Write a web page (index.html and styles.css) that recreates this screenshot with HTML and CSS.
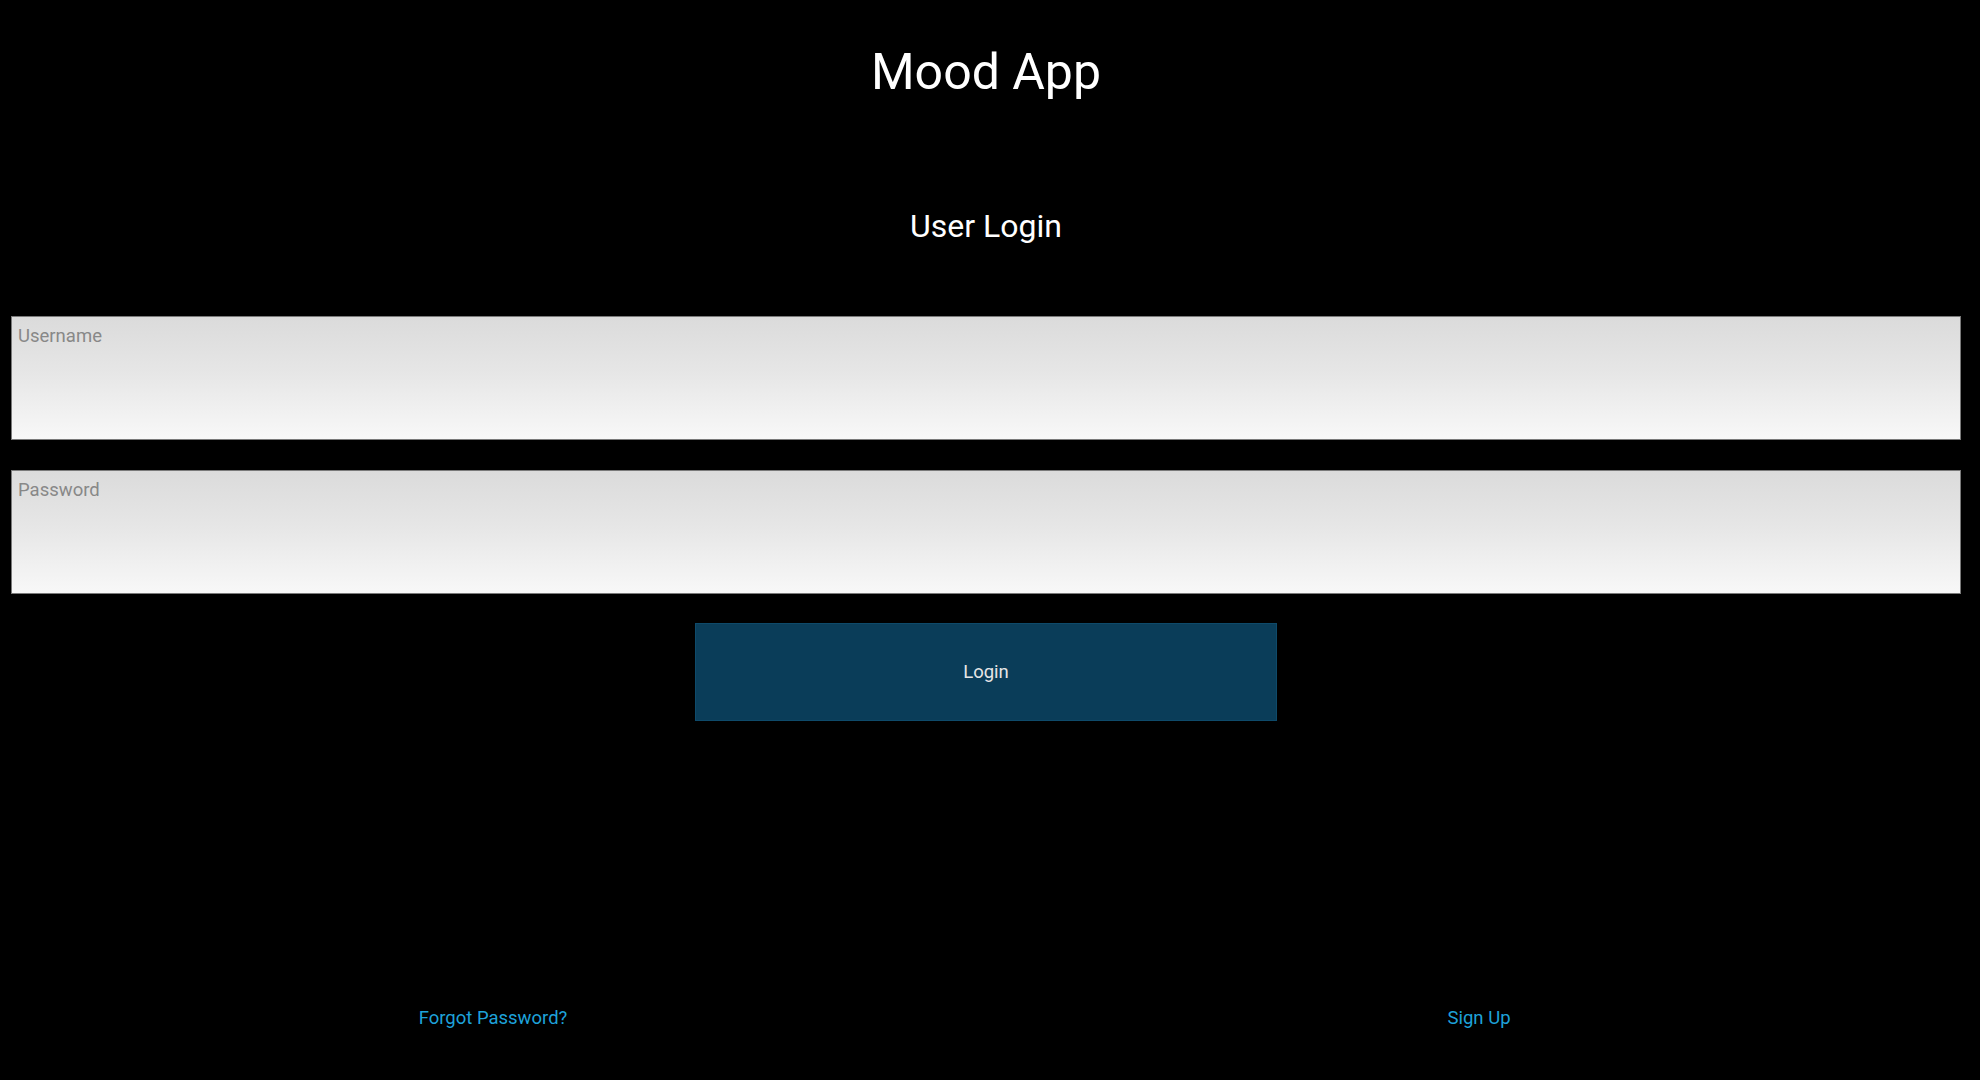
FILE: index.html
```html
<!DOCTYPE html>
<html lang="en">
<head>
<meta charset="utf-8">
<title>Mood App</title>
<link rel="stylesheet" href="styles.css">
</head>
<body>
<div class="page">
  <header class="app-header">
    <h1 class="app-title">Mood App</h1>
  </header>
  <main class="login">
    <h2 class="login-title">User Login</h2>
    <form class="login-form" onsubmit="return false;">
      <input class="field" type="text" placeholder="Username">
      <input class="field" type="password" placeholder="Password">
      <button class="login-btn" type="submit">Login</button>
    </form>
  </main>
  <footer class="links">
    <a class="link" href="#">Forgot Password?</a>
    <a class="link" href="#">Sign Up</a>
  </footer>
</div>
</body>
</html>
```

FILE: styles.css
```css
* { box-sizing: border-box; }
html, body {
  margin: 0;
  padding: 0;
  background: #000;
  height: 100%;
}
body {
  font-family: Roboto, "Liberation Sans", sans-serif;
  color: #fff;
}
.page {
  width: 1972px;
  height: 1080px;
  display: flex;
  flex-direction: column;
}
.app-header {
  display: flex;
  justify-content: center;
  padding-top: 42px;
}
.app-title {
  margin: 0;
  font-size: 50px;
  font-weight: 400;
  line-height: 60px;
  color: #fff;
}
.login {
  display: flex;
  flex-direction: column;
  align-items: center;
}
.login-title {
  margin: 0;
  margin-top: 104px;
  font-size: 32px;
  font-weight: 400;
  line-height: 40px;
  color: #fff;
}
.login-form {
  width: 100%;
  padding: 0 11px;
  margin-top: 70px;
  display: flex;
  flex-direction: column;
  align-items: center;
  gap: 30px;
}
.field {
  width: 100%;
  height: 124px;
  border: 1px solid #7a7a7a;
  border-radius: 0;
  padding: 7px 6px 91px 6px;
  font-family: Roboto, "Liberation Sans", sans-serif;
  font-size: 18.5px;
  line-height: 24px;
  color: #333;
  background: linear-gradient(to bottom, #dbdbdb 0%, #e6e6e6 45%, #f8f8f8 100%);
  outline: none;
}
.field::placeholder {
  color: #888;
}
.login-btn {
  margin-top: -1px;
  width: 582px;
  height: 98px;
  border: 1px solid #0e4a6a;
  background: #0a3d59;
  color: #e6e6e6;
  font-family: Roboto, "Liberation Sans", sans-serif;
  font-size: 18.5px;
  cursor: pointer;
}
.links {
  margin-top: auto;
  margin-bottom: 50px;
  display: grid;
  grid-template-columns: 1fr 1fr;
  justify-items: center;
}
.link {
  color: #1ea2da;
  text-decoration: none;
  font-size: 18.5px;
  line-height: 24px;
}
```
